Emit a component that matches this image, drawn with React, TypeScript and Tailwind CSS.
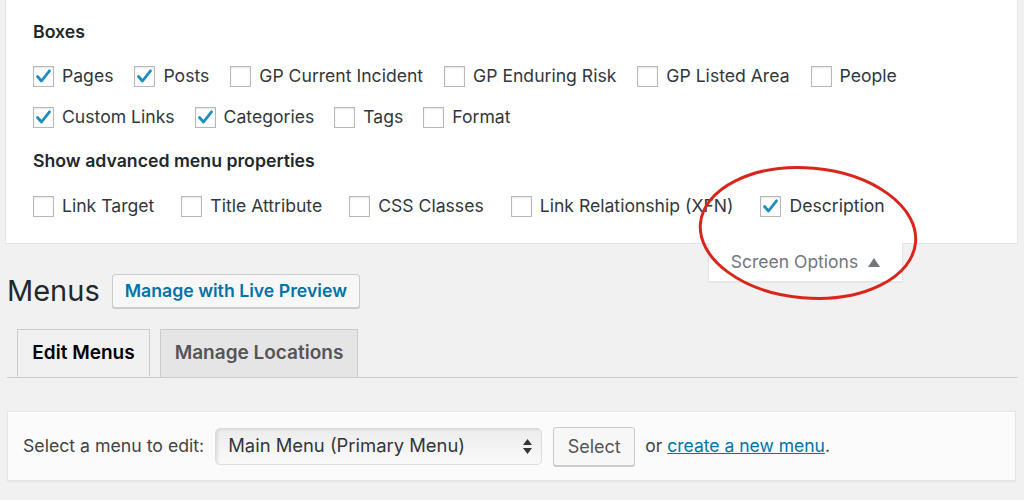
import React from "react";

const font = { fontFamily: "Inter, 'Liberation Sans', Arial, sans-serif" };

function Box({ checked, label }: { checked?: boolean; label: string }) {
  return (
    <label className="flex items-center gap-[8px]">
      <span className="w-[21px] h-[21px] border border-[#b4b9be] bg-white shadow-[inset_0_1px_2px_rgba(0,0,0,0.1)] flex items-center justify-center">
        {checked && (
          <svg width="19" height="19" viewBox="0 0 19 19">
            <polyline
              points="3.5,9.5 7.5,14 15.5,3.8"
              fill="none"
              stroke="#1e8cbe"
              strokeWidth="2.8"
              strokeLinecap="round"
              strokeLinejoin="round"
            />
          </svg>
        )}
      </span>
      <span className="text-[#32373c] text-[17.6px] leading-[24px]">{label}</span>
    </label>
  );
}

export default function App() {
  return (
    <div className="relative w-full h-[500px] overflow-hidden bg-[#f1f1f1]" style={font}>
      {/* screen options panel */}
      <div className="ml-[5px] mr-[6px] bg-white border border-t-0 border-[#e5e5e5] pl-[27px] pt-[20px] pb-[25px]">
        <div className="text-[17.7px] leading-[24px] font-semibold text-[#23282d]">Boxes</div>
        <div className="flex gap-[21px] mt-[20px]">
          <Box checked label="Pages" />
          <Box checked label="Posts" />
          <Box label="GP Current Incident" />
          <Box label="GP Enduring Risk" />
          <Box label="GP Listed Area" />
          <Box label="People" />
        </div>
        <div className="flex gap-[20px] mt-[17px]">
          <Box checked label="Custom Links" />
          <Box checked label="Categories" />
          <Box label="Tags" />
          <Box label="Format" />
        </div>
        <div className="text-[17.7px] leading-[24px] font-semibold text-[#23282d] mt-[20px]">
          Show advanced menu properties
        </div>
        <div className="flex gap-[27px] mt-[21px]">
          <Box label="Link Target" />
          <Box label="Title Attribute" />
          <Box label="CSS Classes" />
          <Box label="Link Relationship (XFN)" />
          <Box checked label="Description" />
        </div>
      </div>

      {/* heading row + screen options tab */}
      <div className="flex justify-between items-start">
        <div className="flex items-center gap-[12px] ml-[7px] mt-[30px]">
          <h1 className="text-[29px] leading-[34px] text-[#23282d]">Menus</h1>
          <button className="h-[34px] px-[12px] border border-[#ccc] bg-[#f7f7f7] rounded-[3px] text-[#0073aa] text-[17.7px] font-semibold shadow-[0_1px_0_#ccc]">
            Manage with Live Preview
          </button>
        </div>
        <div className="mr-[121px] w-[195px] h-[39px] -mt-px bg-white border border-t-0 border-[#e5e5e5] shadow-[0_1px_1px_rgba(0,0,0,0.04)] flex items-center justify-center gap-[10px] text-[#72777c] text-[17.5px]">
          <span>Screen Options</span>
          <svg width="12" height="9" viewBox="0 0 12 9">
            <polygon points="6,0 12,9 0,9" fill="#72777c" />
          </svg>
        </div>
      </div>

      {/* tabs */}
      <div className="ml-[7px] mr-[6px] mt-[21px] border-b border-[#ccc] pl-[10px] flex gap-[10px]">
        <div className="w-[133px] h-[48px] -mb-px bg-[#f1f1f1] border border-[#ccc] border-b-[#f1f1f1] flex items-center justify-center text-[19px] font-semibold text-black">
          Edit Menus
        </div>
        <div className="w-[198px] h-[48px] bg-[#e5e5e5] border border-[#ccc] border-b-0 flex items-center justify-center text-[19px] font-semibold text-[#555]">
          Manage Locations
        </div>
      </div>

      {/* select menu panel */}
      <div className="ml-[7px] mr-[8px] mt-[33px] h-[70px] bg-[#fbfbfb] border border-[#e5e5e5] shadow-[0_1px_1px_rgba(0,0,0,0.04)] pl-[15px] flex items-center">
        <span className="text-[17.7px] text-[#444]">Select a menu to edit:</span>
        <div className="ml-[11px] w-[327px] h-[37px] rounded-[5px] border border-[#dcdcdc] bg-gradient-to-b from-[#ececec] to-[#fafafa] shadow-[inset_2px_1px_2px_rgba(0,0,0,0.08)] flex items-center justify-between pl-[12px] pr-[9px]">
          <span className="text-[18.4px] text-[#32373c]">Main Menu (Primary Menu)</span>
          <svg width="9" height="15" viewBox="0 0 9 15">
            <polygon points="4.5,0 9,6 0,6" fill="#32373c" />
            <polygon points="0,9 9,9 4.5,15" fill="#32373c" />
          </svg>
        </div>
        <button className="ml-[11px] w-[82px] h-[39px] rounded-[3px] border border-[#ccc] bg-[#f7f7f7] shadow-[0_1px_0_#ccc] text-[18px] text-[#555]">
          Select
        </button>
        <span className="ml-[10px] text-[17.5px] text-[#444]">
          or{" "}
          <a href="#" className="text-[#0073aa] underline">
            create a new menu
          </a>
          .
        </span>
      </div>

      {/* red annotation ellipse */}
      <svg className="absolute left-0 top-0 pointer-events-none" width="1024" height="500">
        <ellipse
          cx="808"
          cy="233"
          rx="108"
          ry="65"
          transform="rotate(5 808 233)"
          fill="none"
          stroke="#d9261c"
          strokeWidth="3"
        />
      </svg>
    </div>
  );
}
